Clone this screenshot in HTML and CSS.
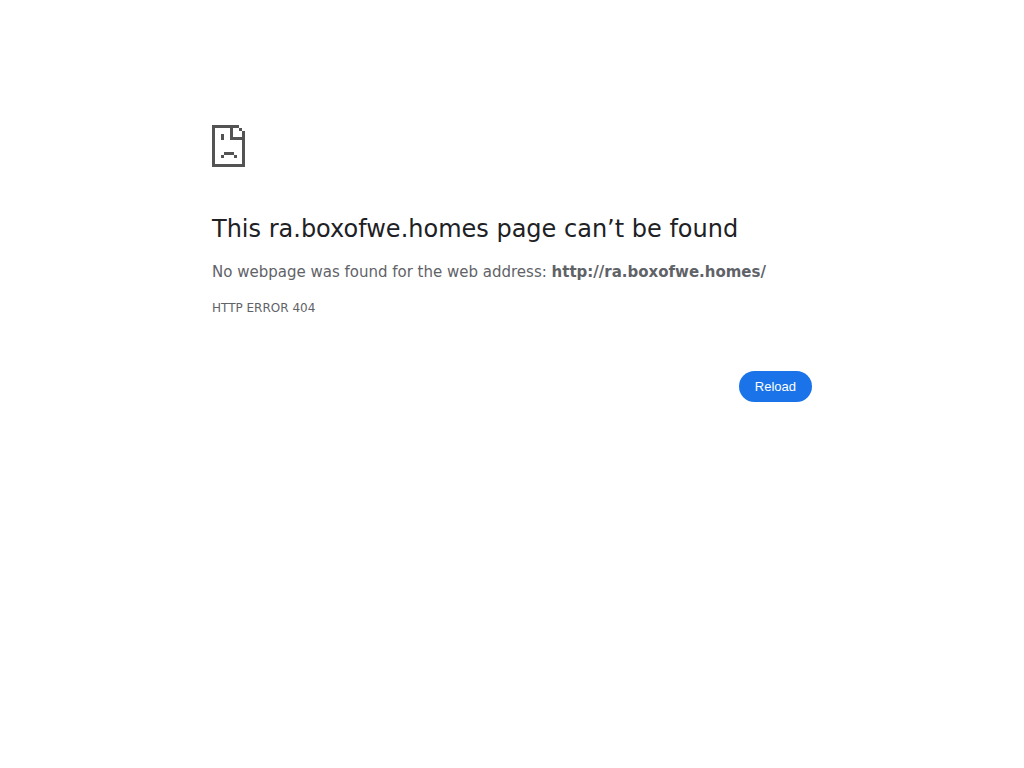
FILE: index.html
```html
<!DOCTYPE html>
<html lang="en">
<head>
    <meta charset="utf-8">
    <meta name="viewport" content="width=device-width, initial-scale=1">
    <title>ra.boxofwe.homes</title>
    <link rel="stylesheet" href="styles.css">
</head>
<body>
    <main class="error-page">
        <svg class="error-icon" viewBox="0 0 33 42" shape-rendering="crispEdges" aria-hidden="true">
            <!-- page outline -->
            <path d="M0 0h27v3H3v36h27V6h3v36H0z"/>
            <!-- folded corner -->
            <path d="M18 3h3v9h9v3H18zM27 3h3v3h-3z"/>
            <!-- eye and mouth -->
            <path d="M9 9h3v6H9zM12 27h10v3H12zM9 30h3v3H9zM22 30h3v3h-3z"/>
        </svg>
        <h1>This ra.boxofwe.homes page can’t be found</h1>
        <p class="summary">No webpage was found for the web address: <strong>http://ra.boxofwe.homes/</strong></p>
        <p class="error-code">HTTP ERROR 404</p>
        <div class="buttons">
            <button class="reload-button" id="reloadButton" type="button">Reload</button>
        </div>
    </main>

    <script>
        document.getElementById('reloadButton').addEventListener('click', () => {
            location.reload();
        });
    </script>
</body>
</html>
```
FILE: styles.css
```css
body {
    margin: 0;
    background: #ffffff;
    color: #5f6368;
    font-family: "DejaVu Sans", sans-serif;
    font-size: 15px;
    line-height: 24px;
}

.error-page {
    max-width: 600px;
    margin: 0 auto;
    padding-top: 125px;
}

.error-icon {
    display: block;
    width: 33px;
    height: 42px;
    margin-bottom: 47px;
    fill: #535353;
}

h1 {
    margin: 0 0 16px;
    color: #202124;
    font-size: 24px;
    font-weight: 500;
    line-height: 30px;
}

.summary {
    margin: 0 0 12px;
}

.error-code {
    margin: 0;
    font-size: 12px;
}

.buttons {
    display: flex;
    justify-content: flex-end;
    margin-top: 51px;
}

.reload-button {
    padding: 8px 16px;
    border: 0;
    border-radius: 20px;
    background: #1a73e8;
    color: #ffffff;
    font-family: "Liberation Sans", Arial, sans-serif;
    font-size: 13px;
    line-height: 15px;
    cursor: pointer;
}

.reload-button:hover {
    background: #1765cc;
}
```
